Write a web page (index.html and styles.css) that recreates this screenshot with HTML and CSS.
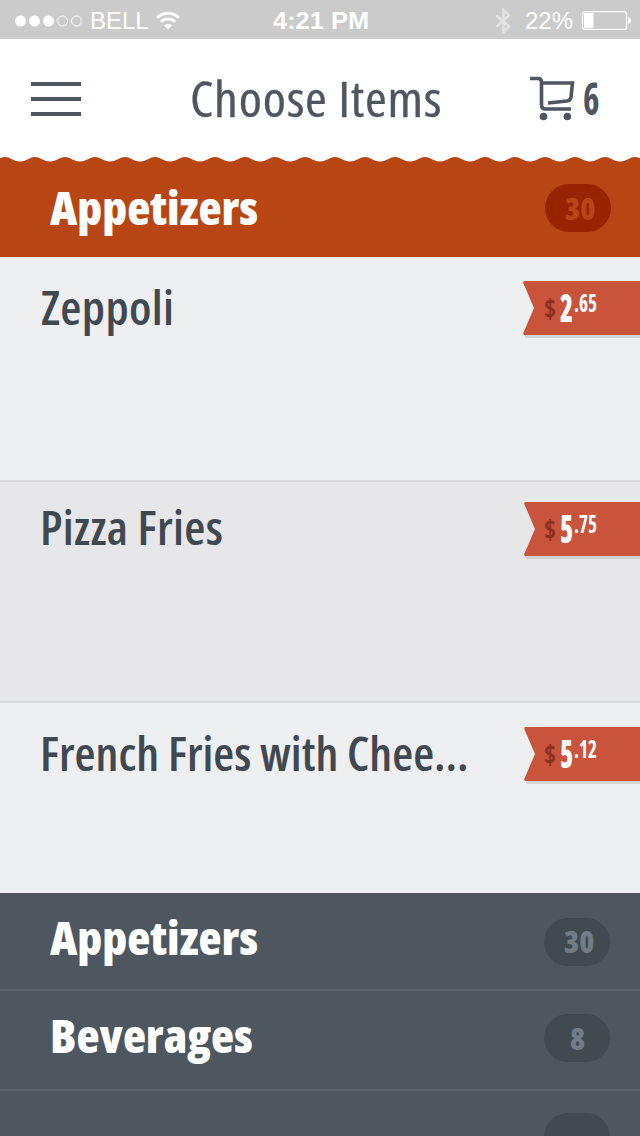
FILE: index.html
```html
<!DOCTYPE html>
<html lang="en">
<head>
  <meta charset="UTF-8">
  <title>Choose Items</title>
  <link rel="stylesheet" href="styles.css">
</head>
<body>

<div class="status-bar">
  <div class="carrier">
    <svg width="68" height="12" viewBox="0 0 68 12">
      <g fill="#fff"><circle cx="6.500" cy="6" r="5.5"/><circle cx="20.500" cy="6" r="5.5"/><circle cx="34.500" cy="6" r="5.5"/></g>
      <g fill="none" stroke="#fff"><circle cx="48.500" cy="6" r="5"/><circle cx="62.500" cy="6" r="5"/></g>
    </svg>
    <span class="fit carrier-name">BELL</span>
    <svg class="wifi" width="24" height="19" viewBox="0 0 24 19">
      <g fill="none" stroke="#fff" stroke-width="3">
        <path d="M1.2 6.6a15.3 15.3 0 0 1 21.6 0"/>
        <path d="M4.9 10.9a10.1 10.1 0 0 1 14.2 0"/>
      </g>
      <path d="M12 18.5l-4-4.2a5.8 5.8 0 0 1 8 0z" fill="#fff"/>
    </svg>
  </div>
  <div class="time"><span class="fit">4:21 PM</span></div>
  <div class="power">
    <svg class="bluetooth" width="16" height="26" viewBox="0 0 16 26">
      <path d="M1.500 7.500L14 18.500L8.500 24V2L14 7.500L1.500 18.500" fill="none" stroke="#e4e4e4" stroke-width="2.400"/>
    </svg>
    <span class="fit percent">22%</span>
    <svg width="50" height="19" viewBox="0 0 50 19">
      <rect x="1.500" y=".6" width="44" height="17.800" rx="2.500" fill="none" stroke="#fff" stroke-width="1.200"/>
      <rect x="3" y="2" width="9.500" height="15" rx="1" fill="#fff"/>
      <path d="M47 6q3 .5 3 3.500t-3 3.500z" fill="#fff"/>
    </svg>
  </div>
</div>

<div class="header">
  <div class="menu"><span></span><span></span><span></span></div>
  <h1><span class="fit">Choose Items</span></h1>
  <div class="cart">
    <svg width="46" height="46" viewBox="0 0 46 46">
      <path d="M0 2.500h8q3.500 0 3.500 4V29q0 4 4 4H41M11.500 7H42.500L41 21q-.3 3.500-4 4L18 27" fill="none" stroke="#4e565f" stroke-width="3.600"/>
      <circle cx="13.500" cy="40.500" r="3.800" fill="#4e565f"/>
      <circle cx="37.300" cy="40.500" r="3.800" fill="#4e565f"/>
    </svg>
    <span class="fit cart-count">6</span>
  </div>
</div>

<div class="category active">
  <svg class="waves" width="640" height="6" viewBox="0 0 640 6">
    <defs>
      <pattern id="wave" x="-10" width="30" height="6" patternUnits="userSpaceOnUse">
        <path d="M0 0H30V4.500C23 4.500 21 0 15 0S7 4.500 0 4.500z" fill="#fff"/>
      </pattern>
    </defs>
    <rect width="640" height="6" fill="url(#wave)"/>
  </svg>
  <h2><span class="fit">Appetizers</span></h2>
  <span class="count"><span class="fit">30</span></span>
</div>

<div class="item first">
  <h3><span class="fit">Zeppoli</span></h3>
  <div class="price">
    <svg class="ribbon" width="117" height="58" viewBox="0 0 117 58">
      <path d="M3 57H117V54H1z" fill="#d3d4d6"/>
      <path d="M117 0H2Q-.5 0 .5 2.500L11 27L.5 51.500Q-.5 54 2 54H117z" fill="#c9533b"/>
    </svg>
    <span class="fit dollar">$</span><span class="fit whole">2</span><span class="fit cents">.65</span>
  </div>
</div>

<div class="item second">
  <h3><span class="fit">Pizza Fries</span></h3>
  <div class="price">
    <svg class="ribbon" width="116" height="58" viewBox="0 0 116 58">
      <path d="M3 57H116V54H1z" fill="#d0d0d2"/>
      <path d="M116 0H2Q-.5 0 .5 2.500L11 27L.5 51.500Q-.5 54 2 54H116z" fill="#c9533b"/>
    </svg>
    <span class="fit dollar">$</span><span class="fit whole">5</span><span class="fit cents">.75</span>
  </div>
</div>

<div class="item third">
  <h3><span class="fit long-name">French Fries with Chee...</span></h3>
  <div class="price">
    <svg class="ribbon" width="116" height="58" viewBox="0 0 116 58">
      <path d="M3 57H116V54H1z" fill="#d3d4d6"/>
      <path d="M116 0H2Q-.5 0 .5 2.500L11 27L.5 51.500Q-.5 54 2 54H116z" fill="#c9533b"/>
    </svg>
    <span class="fit dollar">$</span><span class="fit whole">5</span><span class="fit cents">.12</span>
  </div>
</div>

<div class="category appetizers">
  <h2><span class="fit">Appetizers</span></h2>
  <span class="count"><span class="fit">30</span></span>
</div>
<div class="category beverages">
  <h2><span class="fit">Beverages</span></h2>
  <span class="count single"><span class="fit">8</span></span>
</div>
<div class="category last">
  <span class="count"></span>
</div>

</body>
</html>
```
FILE: styles.css
```css
* {
  box-sizing: border-box;
}

body {
  margin: 0;
  width: 640px;
  height: 1136px;
  overflow: hidden;
  background: #4e565f;
  color: #41484f;
  font-family: "Open Sans", "Noto Sans", sans-serif;
  font-stretch: 75%;
}

svg {
  display: block;
  flex: none;
}

h1, h2, h3 {
  margin: 0;
}

/* condensed lettering */
.fit {
  display: inline-block;
  white-space: nowrap;
  transform-origin: left center;
}

.status-bar {
  display: grid;
  grid-template-columns: 1fr 100px 1fr;
  align-items: center;
  height: 39px;
  padding: 2px 9px 0 14px;
  background: #cbcbcb;
  color: #fff;
  font-family: "Liberation Sans", Arial, sans-serif;
  font-stretch: normal;
  font-size: 24px;
}

.carrier, .power {
  display: flex;
  align-items: center;
}

.carrier-name {
  width: 66px;
  margin-left: 8px;
}

.power {
  justify-content: flex-end;
}

.percent {
  margin: 0 8px 0 14px;
}

.time {
  font-weight: bold;
}

.time .fit {
  transform: scaleX(1.06);
}

.header {
  display: flex;
  align-items: center;
  height: 118px;
  padding: 2px 31px 0;
  background: #fff;
  color: #4e565f;
}

.menu {
  display: grid;
  gap: 11px;
  width: 159px;
}

.menu span {
  width: 50px;
  height: 4px;
  background: #4e565f;
}

h1 {
  width: 340px;
  margin-top: -2px;
  font-size: 49px;
  font-weight: 400;
}

h1 .fit {
  letter-spacing: .7px;
  transform: scaleX(1.077);
  -webkit-text-stroke: .3px currentColor;
}

.cart {
  display: flex;
  align-items: center;
}

.cart-count {
  margin: -3px 0 0 7px;
  font-size: 44px;
  font-weight: 700;
  transform: scaleX(.8);
}

.category {
  position: relative;
  display: flex;
  align-items: flex-start;
  justify-content: space-between;
  height: 98px;
  padding: 0 30px 0 50px;
  border-bottom: 2px solid #59616a;
  color: #fff;
}

.category.active {
  height: 100px;
  padding: 27px 29px 0 50px;
  border: 0;
  background: #b84614;
}

.waves {
  position: absolute;
  top: 0;
  left: 0;
}

h2 {
  margin-top: -1px;
  font-size: 46px;
  font-weight: 800;
  line-height: 48px;
}

h2 .fit {
  transform: scaleX(1.035);
}

.count {
  display: flex;
  align-items: center;
  justify-content: center;
  width: 66px;
  height: 48px;
  padding-left: 3px;
  border-radius: 24px;
  background: #414951;
  color: #727c86;
  font-size: 30px;
  font-weight: 800;
}

.count .fit {
  transform: scaleX(1.02);
}

.single {
  padding-left: 0;
}

.active .count {
  padding-top: 1px;
  background: #982300;
  color: #b84614;
}

.item {
  display: flex;
  align-items: flex-start;
  justify-content: space-between;
  padding-left: 40px;
  background: #eeeff1;
}

.first {
  height: 225px;
  padding-top: 24px;
  border-bottom: 2px solid #d9dadc;
}

.second {
  height: 221px;
  padding-top: 20px;
  background: #e7e7e9;
  border-bottom: 2px solid #d8d9db;
}

.third {
  height: 190px;
  padding-top: 24px;
}

h3 {
  font-size: 46px;
  font-weight: 600;
  line-height: 53px;
}

h3 .fit {
  letter-spacing: .3px;
  transform: scaleX(1.055);
}

.first h3 {
  padding-left: 1px;
}

.second h3 {
  line-height: 50px;
}

h3 .long-name {
  letter-spacing: 0;
  transform: scaleX(1.045);
}

.price {
  position: relative;
  display: flex;
  width: 116px;
  height: 54px;
  padding-left: 20px;
  color: #fff;
  font-weight: 700;
}

.first .price {
  width: 117px;
  padding-left: 21px;
}

.ribbon {
  position: absolute;
  top: 0;
  left: 0;
}

.dollar {
  width: 16px;
  color: #8b2f1f;
  font-size: 27px;
  font-weight: 700;
  line-height: 54px;
  transform: scaleX(.95);
}

.whole {
  width: 14px;
  font-size: 39px;
  font-weight: 800;
  line-height: 51px;
  transform: scaleX(.68);
}

.cents {
  font-size: 25px;
  line-height: 43px;
  transform: scaleX(.77);
}

.price .fit {
  z-index: 1;
}

.appetizers {
  padding-top: 25px;
}

.appetizers h2 {
  margin-top: -5px;
}

.appetizers .count {
  padding-bottom: 2px;
}

.beverages {
  height: 100px;
  padding-top: 23px;
}

.beverages h2 {
  margin-top: -3px;
}

.last {
  height: 94px;
  padding-top: 22px;
  justify-content: flex-end;
  border: 0;
}
```
